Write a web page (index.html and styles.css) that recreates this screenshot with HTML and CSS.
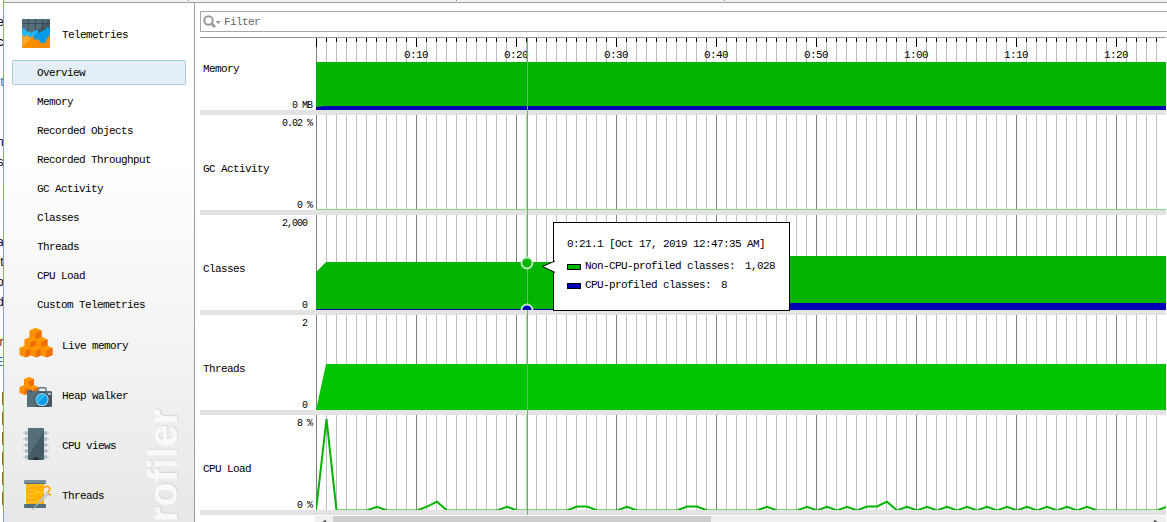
FILE: index.html
```html
<!DOCTYPE html>
<html lang="en">
<head>
    <meta charset="UTF-8">
    <meta name="viewport" content="width=device-width, initial-scale=1.0">
    <title>Telemetries</title>
    <link rel="stylesheet" href="styles.css">
</head>
<body>
    <!-- shared patterns and symbols -->
    <svg class="defs" width="0" height="0">
        <defs>
            <pattern id="grid" width="100" height="100" patternUnits="userSpaceOnUse">
                <path d="M10.5 0V100M20.5 0V100M30.5 0V100M40.5 0V100M50.5 0V100M60.5 0V100M70.5 0V100M80.5 0V100M90.5 0V100" stroke="#c0c0c0"/>
                <path d="M.5 0V100" stroke="#808080"/>
            </pattern>
            <pattern id="ruler" width="100" height="100" patternUnits="userSpaceOnUse">
                <path d="M10.5 4V100M20.5 4V100M30.5 4V100M40.5 4V100M50.5 4V100M60.5 4V100M70.5 4V100M80.5 4V100M90.5 4V100" stroke="#c0c0c0"/>
                <path d="M.5 0V9M10.5 0V4M20.5 0V4M30.5 0V4M40.5 0V4M50.5 0V4M60.5 0V4M70.5 0V4M80.5 0V4M90.5 0V4" stroke="#000"/>
            </pattern>
            <symbol id="cube" viewBox="0 0 12 12" overflow="visible">
                <path d="M0 2.6L6 0L12 2.6V9.6L6 12L0 9.6Z" fill="#ff8f00"/>
                <path d="M0 2.6L6 0L12 2.6L6 5Z" fill="#ff9800"/>
                <path d="M6 5L12 2.6V9.6L6 12Z" fill="#ef6c00"/>
            </symbol>
        </defs>
    </svg>

    <div class="desktop">
        <div class="behind">
            <span>e</span><span>c</span><span></span><span class="blue">t</span><span></span><span></span><span>n</span><span>s</span><span></span><span></span><span></span><span>a</span><span>t</span><span>o</span><span>d</span><span></span><span class="red">r</span><span class="blue">E</span><span></span><i></i><i></i><i></i><i></i><i></i><i></i>
        </div>
        <div class="window">
            <div class="toolbar-edge"><b></b><b></b><b></b></div>
            <div class="main">
                <nav class="sidebar">
                    <div class="watermark">rofiler</div>
                    <div class="section">
                        <svg class="icon" width="32" height="32" viewBox="0 0 32 32">
                            <rect x="2" y="1" width="28" height="29" rx="1" fill="#455a64"/>
                            <path d="M2 1H29L11 19H2Z" fill="#546e7a"/>
                            <path d="M2 5.500H30M8.500 1V14M15.500 1V14M22.500 1V14" stroke="#37474f" stroke-width=".8"/>
                            <path d="M2 11L4 10L7 14L9 13L11 15L14 13L17 12L19 15L22 13L25 12L27 9L30 11V26H2Z" fill="#039be5"/>
                            <path d="M2 11L4 10L7 14L9 13L11 15L14 13L17 12L18 13L7 24H2Z" fill="#29b6f6"/>
                            <path d="M2 17L5 19L7 17L10 20L13 18L15 22L18 21L21 25L25 25L27 21L30 17V30H2Z" fill="#fb8c00"/>
                            <path d="M2 17L5 19L7 17L10 20L11 20L2 29Z" fill="#ffa726"/>
                        </svg>
                        <span>Telemetries</span>
                    </div>
                    <ul class="views">
                        <li class="selected">Overview</li>
                        <li>Memory</li>
                        <li>Recorded Objects</li>
                        <li>Recorded Throughput</li>
                        <li>GC Activity</li>
                        <li>Classes</li>
                        <li>Threads</li>
                        <li>CPU Load</li>
                        <li>Custom Telemetries</li>
                    </ul>
                    <div class="section">
                        <svg class="icon" width="32" height="32" viewBox="0 0 32 32">
                            <use href="#cube" x="9.500" y="-1" width="12" height="12"/>
                            <use href="#cube" x="4.500" y="8" width="12" height="12"/>
                            <use href="#cube" x="15.500" y="8" width="12" height="12"/>
                            <use href="#cube" x="-.5" y="16.500" width="12" height="12"/>
                            <use href="#cube" x="10" y="16.500" width="12" height="12"/>
                            <use href="#cube" x="20.500" y="16.500" width="12" height="12"/>
                        </svg>
                        <span>Live memory</span>
                    </div>
                    <div class="section">
                        <svg class="icon" width="32" height="32" viewBox="0 0 32 32">
                            <use href="#cube" x="4" y="-2" width="10" height="10"/>
                            <use href="#cube" x="-.5" y="6" width="10" height="10"/>
                            <use href="#cube" x="8.500" y="6" width="10" height="10"/>
                            <path d="M18.500 12V9.500Q18.500 8.700 19.300 8.700H25.200Q26 8.700 26 9.500V12" fill="none" stroke="#607d8b" stroke-width="1.400"/>
                            <rect x="7" y="12" width="25" height="16" rx="1.500" fill="#455a64"/>
                            <path d="M8 12H31L15 28H8Q7 28 7 27V13Z" fill="#546e7a"/>
                            <rect x="8" y="11" width="4" height="1.500" fill="#455a64"/>
                            <rect x="28" y="14" width="3" height="2" fill="#b0bec5"/>
                            <circle cx="22" cy="20.500" r="7.500" fill="#37474f"/>
                            <circle cx="22" cy="20.500" r="6.600" fill="#bbdefb"/>
                            <circle cx="22" cy="20.500" r="5.600" fill="#039be5"/>
                            <path d="M18 24.500A5.600 5.600 0 0 1 26 16.500Z" fill="#29b6f6"/>
                        </svg>
                        <span>Heap walker</span>
                    </div>
                    <div class="section">
                        <svg class="icon" width="32" height="32" viewBox="0 0 32 32">
                            <path d="M3 4H29M3 10H29M3 16H29M3 22H29M3 28H29" stroke="#cfd8dc" stroke-width="2"/>
                            <path d="M5 4H27M5 10H27M5 16H27M5 22H27M5 28H27" stroke="#b0bec5" stroke-width="3.600"/>
                            <rect x="8" y="-1" width="16" height="32" rx="1" fill="#455a64"/>
                            <path d="M9 -1H23L24 0V2L8 28V0Z" fill="#546e7a"/>
                            <path d="M13 31A3 3 0 0 1 19 31Z" fill="#263238"/>
                        </svg>
                        <span>CPU views</span>
                    </div>
                    <div class="section">
                        <svg class="icon" width="32" height="32" viewBox="0 0 32 32">
                            <rect x="6" y="4" width="18" height="22" fill="#ffb300"/>
                            <path d="M6 8L24 5M6 16L24 13M6 24L24 21M7 10L22 14M7 18L22 22" stroke="#ffca28"/>
                            <path d="M6 10L24 7M6 22L24 19" stroke="#ffa000" stroke-width=".8"/>
                            <rect x="4" y="1" width="22" height="4" rx="1" fill="#78909c"/>
                            <path d="M5 4H25V5H5Z" fill="#546e7a"/>
                            <rect x="4" y="25" width="22" height="4" rx="1" fill="#546e7a"/>
                            <path d="M24 9Q27 6 29 8Q31 11 28 13Q28 16 31 16" fill="none" stroke="#ffa000" stroke-width="1.500"/>
                            <path d="M12 31L27 13L29 15Z" fill="#cfd8dc" stroke="#90a4ae" stroke-width=".6"/>
                        </svg>
                        <span>Threads</span>
                    </div>
                </nav>

                <div class="content">
                    <div class="filter">
                        <svg width="18" height="14" viewBox="0 0 18 14">
                            <circle cx="5.500" cy="5.500" r="4.200" fill="none" stroke="#999" stroke-width="2"/>
                            <path d="M8.500 8.500L12 12" stroke="#999" stroke-width="2.600"/>
                            <path d="M12.500 6H18L15.200 9Z" fill="#999"/>
                        </svg>
                        <span>Filter</span>
                    </div>

                    <div class="telemetries">
                        <div class="telemetry first">
                            <div class="label">Memory</div>
                            <div class="axis"><span></span><span>0 MB</span></div>
                            <svg class="plot" width="850" height="72">
                                <rect width="850" height="24" fill="url(#ruler)"/>
                                <path d="M.5 9V24" stroke="#808080"/>
                                <g class="ticks">
                                    <text x="88" y="20">0:10</text>
                                    <text x="188" y="20">0:20</text>
                                    <text x="288" y="20">0:30</text>
                                    <text x="388" y="20">0:40</text>
                                    <text x="488" y="20">0:50</text>
                                    <text x="588" y="20">1:00</text>
                                    <text x="688" y="20">1:10</text>
                                    <text x="788" y="20">1:20</text>
                                </g>
                                <rect y="24" width="850" height="48" fill="#00b400"/>
                                <path d="M0 69L10 68H850V72H0Z" fill="#0000b4"/>
                            </svg>
                        </div>
                        <div class="telemetry">
                            <div class="label">GC Activity</div>
                            <div class="axis"><span>0.02 %</span><span>0 %</span></div>
                            <svg class="plot" width="850" height="95">
                                <rect width="850" height="95" fill="url(#grid)"/>
                                <path d="M0 94.500H850" stroke="#80d980"/>
                            </svg>
                        </div>
                        <div class="telemetry">
                            <div class="label">Classes</div>
                            <div class="axis unitless"><span>2,000</span><span>0</span></div>
                            <svg class="plot" width="850" height="95">
                                <rect width="850" height="95" fill="url(#grid)"/>
                                <path d="M0 57L10 47H450L460 41H850V95H0Z" fill="#00b400"/>
                                <path d="M0 94H450L460 88H850V95H0Z" fill="#0000b4"/>
                            </svg>
                        </div>
                        <div class="telemetry">
                            <div class="label">Threads</div>
                            <div class="axis unitless"><span>2</span><span>0</span></div>
                            <svg class="plot" width="850" height="95">
                                <rect width="850" height="95" fill="url(#grid)"/>
                                <path d="M0 95L10 49H850V95Z" fill="#00c400"/>
                            </svg>
                        </div>
                        <div class="telemetry">
                            <div class="label">CPU Load</div>
                            <div class="axis"><span>8 %</span><span>0 %</span></div>
                            <svg class="plot" width="850" height="95">
                                <rect width="850" height="95" fill="url(#grid)"/>
                                <polyline fill="none" stroke="#00b400" stroke-width="2" points="0,95.500 10.500,4 20.500,95.500 51,95.500 61,91.700 71,95.500 101,95.500 111,91.700 121,86.700 131,95.500 181,95.500 191,91.700 201,95.500 251,95.500 261,91.500 271,91.500 281,95.500 301,95.500 311,91.700 321,95.500 361,95.500 371,91.500 381,91.500 391,95.500 441,95.500 451,91.700 461,95.500 481,95.500 491,91.700 501,95.500 511,91.700 521,95.500 531,91.700 541,95.500 551,91.500 561,91.500 571,86.700 581,95.500 591,91.700 601,95.500 611,91.700 621,95.500 631,91.700 641,95.500 651,91.700 661,95.500 671,91.700 681,95.500 691,91.700 701,95.500 711,91.700 721,95.500 731,91.700 741,95.500 751,91.700 761,95.500 771,91.700 781,95.500 841,95.500 851,91.700"/>
                            </svg>
                        </div>
                    </div>

                    <div class="scrollbar">
                        <svg width="18" height="6"><path d="M11 4.500L8 6.500" stroke="#555" stroke-width="2"/></svg>
                        <div class="thumb"></div>
                        <svg class="right" width="18" height="6"><path d="M6 4.500L9 6.500" stroke="#555" stroke-width="2"/></svg>
                    </div>
                </div>
            </div>
        </div>
    </div>

    <!-- crosshair and hover tooltip -->
    <div class="cursor"></div>
    <svg class="marker" width="14" height="14"><circle cx="7" cy="7" r="5.500" fill="#00b400" stroke="#c4ecc4" stroke-width="1.800"/></svg>
    <svg class="marker low" width="14" height="7"><circle cx="7" cy="7" r="5.500" fill="#0000b4" stroke="#c4ecc4" stroke-width="1.800"/></svg>
    <div class="tooltip">
        <svg class="pointer" width="14" height="14"><path d="M14 1L1.500 6.500L14 12.500" fill="#fff" stroke="#000"/></svg>
        <p>0:21.1 [Oct 17, 2019 12:47:35 AM]</p>
        <p><i class="swatch"></i>Non-CPU-profiled classes:<b>1,028</b></p>
        <p><i class="swatch cpu"></i>CPU-profiled classes:<b>8</b></p>
    </div>
</body>
</html>
```
FILE: styles.css
```css
* { box-sizing: border-box; }
body {
    margin: 0; height: 522px; overflow: hidden; background: #fff; color: #000;
    position: relative;
    font-family: "Liberation Mono", monospace;
    font-size: 11px; letter-spacing: -0.6px;
}
svg { display: block; }
.defs { position: absolute; }
.desktop { display: flex; height: 522px; }

/* strip of the window underneath */
.behind {
    width: 4px; padding-top: 12px; border-right: 1px solid #8ab35a;
    overflow: hidden; flex: none; font-size: 12px;
    font-family: "Liberation Sans", sans-serif;
}
.behind span { display: block; height: 20px; line-height: 20px; width: 3px; direction: rtl; overflow: hidden; }
.behind .blue { color: #1a73b8; }
.behind .red { color: #802020; }
.behind i { display: block; width: 1px; height: 13px; margin: 0 0 7px 2px; background: #a06a20; }

.window { flex: 1; display: flex; flex-direction: column; min-width: 0; }
.toolbar-edge { height: 3px; background: #f0f0f0; border-bottom: 1px solid #a0a0a0; display: flex; gap: 267px; padding-left: 184px; }
.toolbar-edge b { width: 1px; height: 1px; background: #888; }
.main { display: flex; height: 519px; }

.sidebar {
    width: 191px; flex: none; position: relative; overflow: hidden;
    padding-top: 6px; border-right: 1px solid #a0a0a0;
    background: linear-gradient(#fff 0, #fff 30%, #e8e8e8 100%);
}
.section { height: 50px; padding-left: 16px; display: flex; align-items: center; gap: 10px; position: relative; }
.section span { padding-top: 1px; }
.icon { overflow: visible; flex: none; }
.views { list-style: none; margin: 0; padding: 1px 8px 0; height: 261px; }
.views li { height: 25px; line-height: 25px; margin-bottom: 4px; padding-left: 24px; border: 1px solid transparent; border-radius: 2px; }
.views .selected { background: #e4eef6; border-color: #a9cbe3; }
.watermark {
    position: absolute; left: 136px; bottom: 0;
    writing-mode: vertical-rl; transform: rotate(180deg);
    font: bold 40px/46px "Liberation Sans", sans-serif; letter-spacing: 0;
    color: #f9f9f9; text-shadow: 1px 1px 1px #d8d8d8;
}

.content { flex: 1; padding: 8px 1px 0 5px; display: flex; flex-direction: column; min-width: 0; }
.filter {
    height: 21px; margin-right: -2px; border: 1px solid #a8a8a8;
    display: flex; align-items: center; gap: 3px; padding-left: 2px; color: #666;
    flex: none;
}
.telemetries { margin-top: 5px; border-top: 1px solid #999; }
.telemetry { display: flex; height: 100px; border-bottom: 5px solid #e3e3e3; }
.telemetry.first { height: 77px; }
.label { width: 56px; padding-left: 3px; align-self: flex-end; height: 47px; line-height: 13px; white-space: nowrap; }
.axis {
    width: 60px; padding: 4px 4px 0 0; text-align: right; flex: none;
    display: flex; flex-direction: column; justify-content: space-between;
    font-size: 10px; letter-spacing: -1px; line-height: 10px;
}
.axis span:last-child { margin-bottom: -1px; }
.axis.unitless { padding-right: 9px; }
.plot { flex: none; }
.ticks text { font-size: 11px; letter-spacing: -0.6px; }

.scrollbar { display: flex; height: 6px; margin: 1px 0 0 115px; background: #f0f0f0; }
.thumb { width: 378px; background: #cdcdcd; }
.scrollbar .right { margin-left: auto; }

.cursor { position: absolute; left: 527px; top: 38px; width: 1px; height: 477px; background: #66b866; }
.marker { position: absolute; left: 520px; top: 256px; }
.marker.low { top: 303px; }
.tooltip {
    position: absolute; left: 553px; top: 222px; width: 237px; height: 89px;
    padding: 11px 0 0 13px; background: #fff; border: 1px solid #000;
}
.tooltip p { margin: 0; height: 19px; line-height: 19px; display: flex; align-items: center; white-space: nowrap; }
.tooltip p:first-of-type { height: 21px; margin-bottom: 2px; }
.tooltip b { font-weight: normal; margin-left: 10px; }
.swatch { width: 14px; height: 6px; background: #00b400; border: 1px solid #000; margin-right: 4px; }
.swatch.cpu { background: #0000b4; }
.pointer { position: absolute; left: -13px; top: 37px; }
```
